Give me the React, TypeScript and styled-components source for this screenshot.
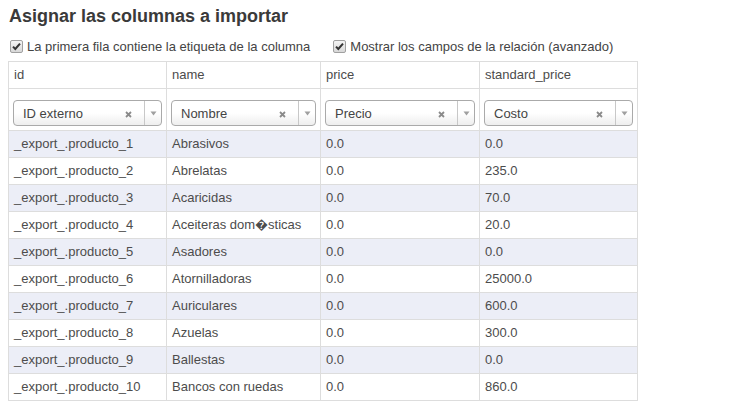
import React from 'react'
import styled, { createGlobalStyle } from 'styled-components'

const GlobalStyle = createGlobalStyle`
  html, body {
    margin: 0;
    padding: 0;
    background: #fff;
  }
  body {
    font-family: "Liberation Sans", Arial, sans-serif;
    font-size: 13px;
    color: #4c4c4c;
  }
`

interface Row {
  id: string
  name: string
  price: string
  cost: string
}

const rows: Row[] = [
  { id: '_export_.producto_1', name: 'Abrasivos', price: '0.0', cost: '0.0' },
  { id: '_export_.producto_2', name: 'Abrelatas', price: '0.0', cost: '235.0' },
  { id: '_export_.producto_3', name: 'Acaricidas', price: '0.0', cost: '70.0' },
  { id: '_export_.producto_4', name: 'Aceiteras dom\uFFFDsticas', price: '0.0', cost: '20.0' },
  { id: '_export_.producto_5', name: 'Asadores', price: '0.0', cost: '0.0' },
  { id: '_export_.producto_6', name: 'Atornilladoras', price: '0.0', cost: '25000.0' },
  { id: '_export_.producto_7', name: 'Auriculares', price: '0.0', cost: '600.0' },
  { id: '_export_.producto_8', name: 'Azuelas', price: '0.0', cost: '300.0' },
  { id: '_export_.producto_9', name: 'Ballestas', price: '0.0', cost: '0.0' },
  { id: '_export_.producto_10', name: 'Bancos con ruedas', price: '0.0', cost: '860.0' }
]

const columns = [
  { field: 'id', label: 'ID externo', width: 158 },
  { field: 'name', label: 'Nombre', width: 154 },
  { field: 'price', label: 'Precio', width: 159 },
  { field: 'standard_price', label: 'Costo', width: 158 }
]

const Check = (): React.ReactElement => (
  <CheckBox>
    <svg width="11" height="11" viewBox="0 0 11 11">
      <path d="M2 5.6 L4.3 8 L9 2.6" fill="none" stroke="#333" strokeWidth="2" />
    </svg>
  </CheckBox>
)

const Select = ({ label }: { label: string }): React.ReactElement => (
  <SelectBox>
    <SelectText>{label}</SelectText>
    <Clear>
      <svg width="7" height="7" viewBox="0 0 7 7">
        <path d="M1 1 L6 6 M6 1 L1 6" stroke="#8a8a8a" strokeWidth="1.8" />
      </svg>
    </Clear>
    <Arrow>
      <svg width="7" height="5" viewBox="0 0 7 5">
        <path d="M0.5 0.5 L6.5 0.5 L3.5 4.5 Z" fill="#a0a0a0" />
      </svg>
    </Arrow>
  </SelectBox>
)

const App = (): React.ReactElement => {
  return (
    <Page>
      <GlobalStyle />
      <Title>Asignar las columnas a importar</Title>
      <Options>
        <Option><Check />La primera fila contiene la etiqueta de la columna</Option>
        <Option><Check />Mostrar los campos de la relación (avanzado)</Option>
      </Options>
      <Table>
        <colgroup>
          {columns.map(c => <col key={c.field} style={{ width: c.width }} />)}
        </colgroup>
        <thead>
          <tr>
            {columns.map(c => <HeadCell key={c.field}>{c.field}</HeadCell>)}
          </tr>
          <tr>
            {columns.map(c => (
              <SelectCell key={c.field}><Select label={c.label} /></SelectCell>
            ))}
          </tr>
        </thead>
        <tbody>
          {rows.map((r, i) => (
            <DataRow key={r.id} $striped={i % 2 === 0}>
              <Cell>{r.id}</Cell>
              <Cell>{r.name}</Cell>
              <Cell>{r.price}</Cell>
              <Cell>{r.cost}</Cell>
            </DataRow>
          ))}
        </tbody>
      </Table>
    </Page>
  )
}

export default App

const Page = styled.div`
  padding: 4px 8px 0;
`
const Title = styled.h2`
  margin: 0 0 0 1px;
  font-size: 18px;
  line-height: 24px;
  font-weight: bold;
  color: #3a3a3a;
`
const Options = styled.div`
  display: flex;
  gap: 23px;
  margin: 11px 0 7px 2px;
  line-height: 15px;
`
const Option = styled.label`
  display: flex;
  align-items: center;
  gap: 4px;
  color: #444;
`
const CheckBox = styled.span`
  display: inline-flex;
  align-items: center;
  justify-content: center;
  width: 11px;
  height: 11px;
  border: 1px solid #a0a0a0;
  border-radius: 2px;
  background: linear-gradient(#f4f4f4, #d8d8d8);
`
const Table = styled.table`
  border-collapse: collapse;
  table-layout: fixed;
  width: 629px;
  border: 1px solid #ddd;
`
const HeadCell = styled.th`
  border: 1px solid #ddd;
  padding: 4px 5px;
  line-height: 18px;
  height: 18px;
  font-weight: normal;
  text-align: left;
  color: #4c4c4c;
`
const SelectCell = styled.td`
  border: 1px solid #ddd;
  padding: 11px 4px 4px;
`
const SelectBox = styled.div`
  display: flex;
  align-items: center;
  height: 24px;
  border: 1px solid #aaa;
  border-radius: 4px;
  background: linear-gradient(#ffffff 50%, #eeeeee);
`
const SelectText = styled.span`
  flex: 1;
  padding-left: 9px;
  color: #444;
  white-space: nowrap;
  overflow: hidden;
`
const Clear = styled.span`
  display: flex;
  align-items: center;
  justify-content: center;
  width: 7px;
  margin-right: 12px;
  padding-top: 3px;
`
const Arrow = styled.span`
  display: flex;
  align-items: center;
  justify-content: center;
  width: 16px;
  height: 24px;
  border-left: 1px solid #c8c8c8;
`
const DataRow = styled.tr<{ $striped: boolean }>`
  background: ${p => (p.$striped ? '#eceef7' : '#fff')};
`
const Cell = styled.td`
  border: 1px solid #ddd;
  padding: 4px 5px;
  line-height: 18px;
  white-space: nowrap;
  overflow: hidden;
  color: #4c4c4c;
`
